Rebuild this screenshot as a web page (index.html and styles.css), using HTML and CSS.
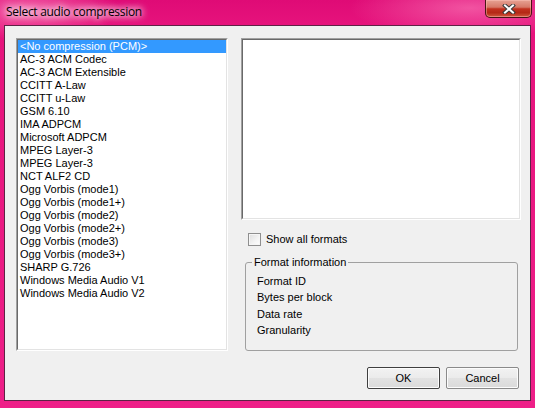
FILE: index.html
```html
<!DOCTYPE html>
<html>
<head>
<meta charset="utf-8">
<link rel="stylesheet" href="styles.css">
</head>
<body>
<div class="window">
  <div class="titlebar">
    <span class="title">Select audio compression</span>
    <div class="close">
      <svg width="14" height="10" viewBox="0 0 14 10">
        <path d="M3 1.5 L11 8.5 M11 1.5 L3 8.5" stroke="#3a3a3a" stroke-width="4" stroke-linecap="square"/>
        <path d="M3 1.5 L11 8.5 M11 1.5 L3 8.5" stroke="#ffffff" stroke-width="2" stroke-linecap="square"/>
      </svg>
    </div>
  </div>
  <div class="client">
    <div class="main">
      <div class="sunken listbox">
        <div class="sunken-inner list">
          <div class="item selected">&lt;No compression (PCM)&gt;</div>
          <div class="item">AC-3 ACM Codec</div>
          <div class="item">AC-3 ACM Extensible</div>
          <div class="item">CCITT A-Law</div>
          <div class="item">CCITT u-Law</div>
          <div class="item">GSM 6.10</div>
          <div class="item">IMA ADPCM</div>
          <div class="item">Microsoft ADPCM</div>
          <div class="item">MPEG Layer-3</div>
          <div class="item">MPEG Layer-3</div>
          <div class="item">NCT ALF2 CD</div>
          <div class="item">Ogg Vorbis (mode1)</div>
          <div class="item">Ogg Vorbis (mode1+)</div>
          <div class="item">Ogg Vorbis (mode2)</div>
          <div class="item">Ogg Vorbis (mode2+)</div>
          <div class="item">Ogg Vorbis (mode3)</div>
          <div class="item">Ogg Vorbis (mode3+)</div>
          <div class="item">SHARP G.726</div>
          <div class="item">Windows Media Audio V1</div>
          <div class="item">Windows Media Audio V2</div>
        </div>
      </div>
      <div class="right">
        <div class="sunken preview">
          <div class="sunken-inner"></div>
        </div>
        <label class="check-row">
          <span class="checkbox"></span>
          <span>Show all formats</span>
        </label>
        <fieldset class="group">
          <legend>Format information</legend>
          <div class="info">Format ID</div>
          <div class="info">Bytes per block</div>
          <div class="info">Data rate</div>
          <div class="info">Granularity</div>
        </fieldset>
      </div>
    </div>
    <div class="buttons">
      <button class="btn default">OK</button>
      <button class="btn">Cancel</button>
    </div>
  </div>
</div>
</body>
</html>
```

FILE: styles.css
```css
* { box-sizing: border-box; }
html, body { margin: 0; padding: 0; }
body {
  width: 535px;
  height: 408px;
  overflow: hidden;
  font-family: "Liberation Sans", Arial, sans-serif;
  font-size: 11px;
  color: #000;
}
.window {
  width: 535px;
  height: 408px;
  padding: 0 4px 7px 4px;
  background:
    radial-gradient(ellipse 90px 30px at 30px 10px, rgba(255,150,200,0.6), rgba(255,150,200,0) 100%),
    radial-gradient(ellipse 120px 30px at 470px 8px, rgba(255,140,195,0.55), rgba(255,140,195,0) 100%),
    linear-gradient(to bottom, #df0b76 0, #e6137c 25px, #ee1f88 100%);
  display: flex;
  flex-direction: column;
}
.titlebar {
  height: 25px;
  display: flex;
  align-items: flex-start;
  flex-shrink: 0;
}
.title {
  font-family: "Open Sans", "Noto Sans", sans-serif;
  font-size: 12px;
  line-height: 16px;
  padding: 4px 0 0 2px;
  color: #000;
  text-shadow: 0 0 6px #fff, 0 0 8px rgba(255,255,255,0.9), 0 0 10px rgba(255,255,255,0.7);
  letter-spacing: -0.3px;
}
.close {
  margin-left: auto;
  margin-right: -1px;
  width: 47px;
  height: 18px;
  border: 1px solid #4a1414;
  border-top: none;
  border-radius: 0 0 5px 5px;
  background: linear-gradient(to bottom, #e7a293 0%, #d67968 42%, #c2321f 52%, #b52816 75%, #d05a3e 100%);
  box-shadow: inset 0 0 0 1px rgba(255,200,190,0.45);
  display: flex;
  align-items: center;
  justify-content: center;
}
.close svg { display: block; }
.client {
  flex: 1;
  background: #f0f0f0;
  border: 1px solid #5e2345;
  padding: 12px 9px 0 11px;
  display: flex;
  flex-direction: column;
}
.main {
  display: flex;
  gap: 13px;
  align-items: flex-start;
}
.sunken {
  border: 1px solid;
  border-color: #a0a0a0 #ffffff #ffffff #a0a0a0;
}
.sunken-inner {
  border: 1px solid;
  border-color: #696969 #e3e3e3 #e3e3e3 #696969;
  background: #fff;
  height: 100%;
}
.listbox {
  width: 212px;
  height: 313px;
}
.item {
  height: 13px;
  line-height: 13px;
  padding-left: 2px;
  white-space: nowrap;
}
.item.selected {
  background: #3399ff;
  color: #fff;
}
.right {
  width: 280px;
  display: flex;
  flex-direction: column;
}
.preview {
  height: 182px;
}
.check-row {
  display: flex;
  align-items: center;
  margin: 13px 0 0 7px;
  height: 13px;
  line-height: 13px;
  gap: 5px;
}
.checkbox {
  width: 13px;
  height: 13px;
  border: 1px solid #8f8f8f;
  background: linear-gradient(135deg, #dedede 0%, #f4f4f4 60%, #ffffff 100%);
  box-shadow: inset 0 0 0 1px #f6f6f6;
}
.group {
  margin: 10px 3px 0 4px;
  padding: 4px 0 11px 11px;
  border: 1px solid #a0a0a0;
  border-radius: 3px;
  min-width: 0;
}
.group legend {
  margin-left: -5px;
  padding: 0 2px;
  line-height: 13px;
  height: 13px;
}
.info {
  line-height: 16.4px;
  height: 16.4px;
}
.buttons {
  display: flex;
  justify-content: flex-end;
  gap: 6px;
  margin-top: 16px;
  padding-right: 2px;
}
.btn {
  width: 73px;
  height: 22px;
  font-family: "Liberation Sans", Arial, sans-serif;
  font-size: 11px;
  color: #000;
  border: 1px solid #8a8a8a;
  border-radius: 2px;
  background: linear-gradient(to bottom, #f2f2f2 0%, #ebebeb 50%, #e2e2e2 51%, #dadada 100%);
  box-shadow: inset 0 0 0 1px #fcfcfc;
  padding: 0;
}
.btn.default {
  border-color: #3f3f3f;
}
```
